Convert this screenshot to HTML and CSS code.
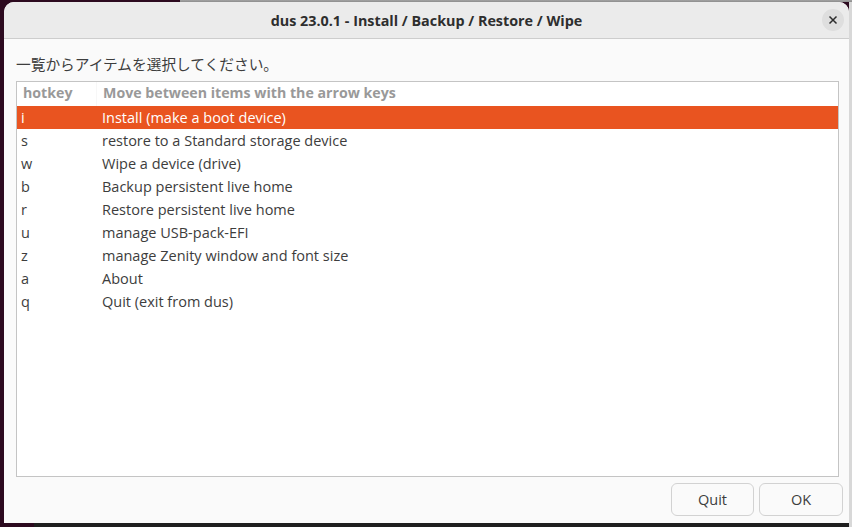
FILE: index.html
```html
<!DOCTYPE html>
<html lang="ja">
<head>
<meta charset="utf-8">
<title>dus</title>
<link rel="stylesheet" href="styles.css">
</head>
<body>
<div class="window">
  <div class="titlebar">
    <div class="title">dus 23.0.1 - Install / Backup / Restore / Wipe</div>
    <button class="close" aria-label="Close">
      <svg width="22" height="22" viewBox="0 0 22 22"><path d="M7.5 7.5 L14.5 14.5 M14.5 7.5 L7.5 14.5" stroke="#2e2e2e" stroke-width="1.5" fill="none"/></svg>
    </button>
  </div>
  <div class="content">
    <div class="label">一覧からアイテムを選択してください。</div>
    <div class="list">
      <div class="row head"><div class="c1">hotkey</div><div class="c2">Move between items with the arrow keys</div></div>
      <div class="row sel"><div class="c1">i</div><div class="c2">Install (make a boot device)</div></div>
      <div class="row"><div class="c1">s</div><div class="c2">restore to a Standard storage device</div></div>
      <div class="row"><div class="c1">w</div><div class="c2">Wipe a device (drive)</div></div>
      <div class="row"><div class="c1">b</div><div class="c2">Backup persistent live home</div></div>
      <div class="row"><div class="c1">r</div><div class="c2">Restore persistent live home</div></div>
      <div class="row"><div class="c1">u</div><div class="c2">manage USB-pack-EFI</div></div>
      <div class="row"><div class="c1">z</div><div class="c2">manage Zenity window and font size</div></div>
      <div class="row"><div class="c1">a</div><div class="c2">About</div></div>
      <div class="row"><div class="c1">q</div><div class="c2">Quit (exit from dus)</div></div>
    </div>
    <div class="buttons">
      <button class="btn quit">Quit</button>
      <button class="btn ok">OK</button>
    </div>
  </div>
</div>
</body>
</html>
```
FILE: styles.css
```css
html, body {
  margin: 0;
  padding: 0;
}
body {
  width: 852px;
  height: 527px;
  overflow: hidden;
  font-family: "Open Sans", "Noto Sans CJK JP", sans-serif;
  background:
    linear-gradient(#a3a3a3, #8c8c8c) 180px 0 / 672px 2px no-repeat,
    linear-gradient(#d8d8d8, #d8d8d8) 849px 0 / 3px 527px no-repeat,
    linear-gradient(#1f1f1f, #1f1f1f) 34px 523px / 818px 4px no-repeat,
    #2c0a1f;
}
.window {
  margin: 2px 0 0 4px;
  width: 845px;
  height: 521px;
  border-radius: 10px 10px 0 0;
  background: #fafafa;
  display: flex;
  flex-direction: column;
  overflow: hidden;
  color: #3d3d3d;
}
.titlebar {
  height: 36px;
  flex: none;
  background: #ebebeb;
  border-bottom: 1px solid #cdcdcd;
  display: flex;
  align-items: center;
  justify-content: center;
  position: relative;
}
.title {
  font-weight: bold;
  font-size: 14.35px;
  color: #2e2e2e;
}
.close {
  position: absolute;
  right: 5px;
  top: 7px;
  width: 22px;
  height: 22px;
  padding: 0;
  border: none;
  border-radius: 50%;
  background: #dedede;
  display: flex;
  align-items: center;
  justify-content: center;
}
.content {
  flex: 1;
  display: flex;
  flex-direction: column;
  padding: 0 10px 8px 12px;
}
.label {
  font-family: "Noto Sans CJK JP", sans-serif;
  font-size: 14.7px;
  line-height: 20px;
  margin-top: 15px;
  color: #3d3d3d;
}
.list {
  margin-top: 7px;
  height: 394px;
  border: 1px solid #c4c4c4;
  background: #ffffff;
  font-size: 14.5px;
}
.row {
  display: flex;
  height: 23px;
  align-items: center;
}
.row .c1 {
  width: 80px;
  padding-left: 4px;
  box-sizing: border-box;
}
.row .c2 {
  padding-left: 5px;
}
.row.head {
  height: 24px;
  font-weight: bold;
  font-size: 14.2px;
  color: #999999;
  align-items: stretch;
}
.row.head .c1 {
  padding-left: 6px;
  line-height: 21px;
  border-right: 1px solid #f7f7f7;
}
.row.head .c2 {
  padding-left: 6px;
  line-height: 21px;
}
.row.sel {
  background: #e95420;
  color: #ffffff;
}
.buttons {
  display: flex;
  justify-content: flex-end;
  gap: 5px;
  margin-top: 6px;
  margin-right: -4px;
}
.btn {
  height: 33px;
  border: 1px solid #d2d2d2;
  border-radius: 6px;
  background: #fafafa;
  font-family: "Open Sans", sans-serif;
  font-size: 14.5px;
  color: #3d3d3d;
  padding: 0;
}
.btn.quit { width: 83px; }
.btn.ok { width: 84px; }
```
